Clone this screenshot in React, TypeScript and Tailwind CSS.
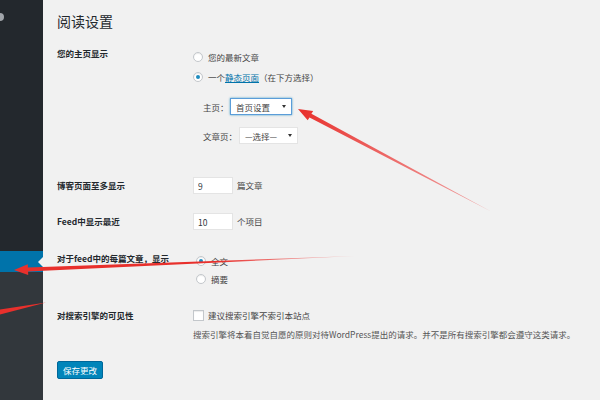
import type { ReactNode } from 'react';

const font = "font-['Noto_Sans_CJK_SC','Noto_Sans',sans-serif]";

function Radio({ checked, children }: { checked?: boolean; children: ReactNode }) {
  return (
    <div className="flex h-[14px] items-center">
      <span className="flex h-[10px] w-[10px] items-center justify-center rounded-full border border-[#c3c7cb] bg-white shadow-[inset_0_1px_1px_rgba(0,0,0,0.08)]">
        {checked && <span className="h-[4px] w-[4px] rounded-full bg-[#1e8cbe]" />}
      </span>
      <span className="ml-[5px]">{children}</span>
    </div>
  );
}

function Select({ value, focused, width }: { value: string; focused?: boolean; width: string }) {
  return (
    <div
      className={`flex h-[17px] items-center justify-between bg-white pl-[5px] pr-[5px] ${width} ${
        focused ? 'border border-[#5b9dd9] shadow-[0_0_2px_rgba(30,140,190,0.8)]' : 'border border-[#e4e4e4]'
      }`}
    >
      <span>{value}</span>
      <span className="h-0 w-0 border-x-[2px] border-t-[3px] border-x-transparent border-t-[#333]" />
    </div>
  );
}

function Arrows() {
  return (
    <svg className="pointer-events-none absolute left-0 top-0" width="600" height="400" viewBox="0 0 600 400">
      <defs>
        <linearGradient id="g1" x1="492" y1="212" x2="300" y2="110" gradientUnits="userSpaceOnUse">
          <stop offset="0" stopColor="#f06a6a" stopOpacity="0.6" />
          <stop offset="1" stopColor="#e8302c" />
        </linearGradient>
        <linearGradient id="g2" x1="355" y1="256" x2="14" y2="270" gradientUnits="userSpaceOnUse">
          <stop offset="0" stopColor="#f07070" stopOpacity="0.4" />
          <stop offset="0.4" stopColor="#e8302c" />
          <stop offset="1" stopColor="#e8302c" />
        </linearGradient>
      </defs>
      <polygon
        points="298,109 313.2,110.9 311.4,113.8 492,212 309.5,117.5 307.7,120.3"
        fill="url(#g1)"
      />
      <polygon points="14,270 28.2,275 28.1,271.6 355,256 27.9,267.6 27.8,264.2" fill="url(#g2)" />
      <polygon points="0,309.5 46,302.5 0,314.5" fill="#e8302c" />
    </svg>
  );
}

export default function App() {
  return (
    <div className={`relative flex h-[400px] w-[600px] overflow-hidden bg-[#f1f1f1] text-[8.5px] text-[#444] ${font}`}>
      <aside className="flex w-[43px] shrink-0 flex-col bg-[#23282d]">
        <div className="h-[251px] pt-[13px]">
          <span className="-ml-[4px] block h-[8px] w-[8px] rounded-full bg-[#a0a5aa]" />
        </div>
        <div className="relative h-[21px] bg-[#0073aa]">
          <span className="absolute right-0 top-[6px] h-0 w-0 border-y-[5px] border-r-[5px] border-y-transparent border-r-[#f1f1f1]" />
        </div>
        <div className="flex-1 bg-[#32373c]" />
      </aside>

      <main className="flex-1 pl-[14px]">
        <h1 className="pt-[11px] text-[14px] font-normal leading-[20px] text-[#23282d]">阅读设置</h1>

        <div className="mt-[15px] flex">
          <div className="w-[136px] shrink-0 text-[8.5px] font-bold leading-[14px] text-[#23282d]">您的主页显示</div>
          <div className="pt-[4px] leading-[14px]">
            <Radio>您的最新文章</Radio>
            <div className="mt-[6px]">
              <Radio checked>
                一个<span className="text-[#0073aa] underline">静态页面</span>（在下方选择）
              </Radio>
            </div>
            <div className="mt-[14px] flex items-center pl-[10px]">
              <span className="w-[27px]">主页：</span>
              <Select value="首页设置" focused width="w-[62px]" />
            </div>
            <div className="mt-[12px] flex items-center pl-[10px]">
              <span className="w-[36px]">文章页：</span>
              <Select value="—选择—" width="w-[59px]" />
            </div>
          </div>
        </div>

        <div className="mt-[33px] flex h-[17px] items-center">
          <div className="w-[136px] shrink-0 font-bold text-[#23282d]">博客页面至多显示</div>
          <input
            readOnly
            defaultValue="9"
            className="h-[17px] w-[40px] border border-[#e4e4e4] bg-white px-[4px] text-[8.5px] text-[#32373c] outline-none"
          />
          <span className="ml-[4px]">篇文章</span>
        </div>

        <div className="mt-[19px] flex h-[17px] items-center">
          <div className="w-[136px] shrink-0 font-bold text-[#23282d]">Feed中显示最近</div>
          <input
            readOnly
            defaultValue="10"
            className="h-[17px] w-[40px] border border-[#e4e4e4] bg-white px-[4px] text-[8.5px] text-[#32373c] outline-none"
          />
          <span className="ml-[4px]">个项目</span>
        </div>

        <div className="mt-[21px] flex leading-[14px]">
          <div className="w-[136px] shrink-0 font-bold text-[#23282d]">对于feed中的每篇文章，显示</div>
          <div className="pl-[3px] pt-[3px]">
            <Radio checked>全文</Radio>
            <div className="mt-[4px]">
              <Radio>摘要</Radio>
            </div>
          </div>
        </div>

        <div className="mt-[22px] flex leading-[14px]">
          <div className="w-[136px] shrink-0 font-bold text-[#23282d]">对搜索引擎的可见性</div>
          <div>
            <div className="flex h-[14px] items-center">
              <span className="h-[11px] w-[11px] border border-[#c3c7cb] bg-white shadow-[inset_0_1px_1px_rgba(0,0,0,0.08)]" />
              <span className="ml-[4px]">建议搜索引擎不索引本站点</span>
            </div>
            <p className="mt-[5px] text-[#555]">
              搜索引擎将本着自觉自愿的原则对待WordPress提出的请求。并不是所有搜索引擎都会遵守这类请求。
            </p>
          </div>
        </div>

        <button className="mt-[20px] flex h-[18px] w-[46px] items-center justify-center rounded-[2px] border border-[#006799] bg-[#0085ba] text-[8.5px] text-white">
          保存更改
        </button>
      </main>

      <Arrows />
    </div>
  );
}
